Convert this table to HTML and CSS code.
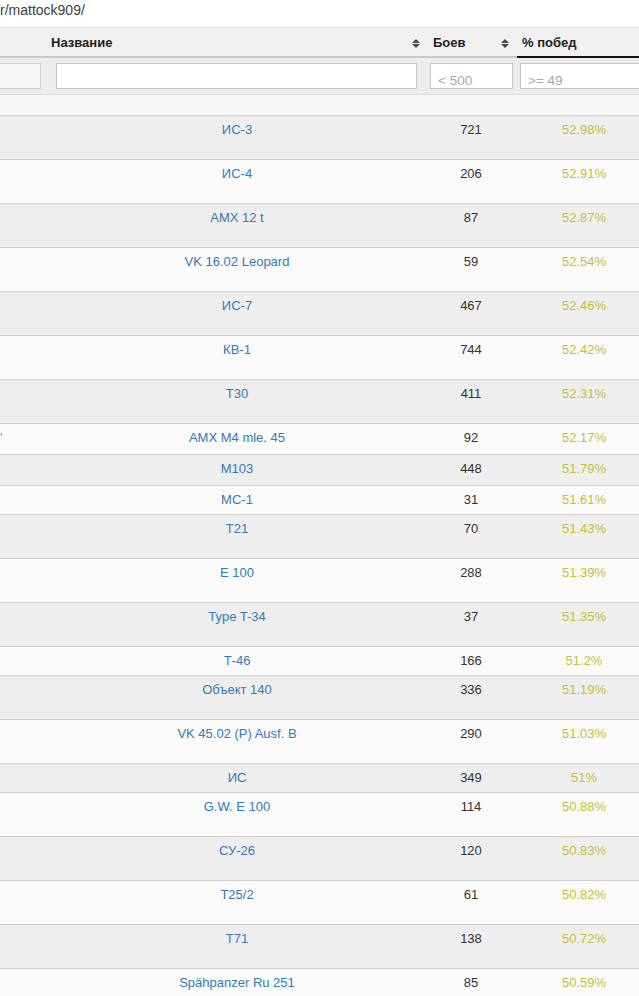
FILE: index.html
```html
<!DOCTYPE html>
<html lang="ru">
<head>
<meta charset="utf-8">
<title>mattock909</title>
<link rel="stylesheet" href="styles.css">
</head>
<body>
<div class="urlbar">r/mattock909/</div>
<div class="table">
  <div class="row head">
    <div class="cell"></div>
    <div class="cell sortable name-h"><span>Название</span><svg class="sort" width="8" height="9" viewBox="0 0 8 9"><polygon points="0,4 4,0 8,4"/><polygon points="0,5 4,9 8,5"/></svg></div>
    <div class="cell sortable battles-h"><span>Боев</span><svg class="sort" width="8" height="9" viewBox="0 0 8 9"><polygon points="0,4 4,0 8,4"/><polygon points="0,5 4,9 8,5"/></svg></div>
    <div class="cell sorted"><span>% побед</span></div>
  </div>
  <div class="row filters">
    <div class="cell f0"><input class="inp disabled" type="text"></div>
    <div class="cell f1"><input class="inp" type="text"></div>
    <div class="cell f2"><input class="inp" type="text" placeholder="< 500"></div>
    <div class="cell f3"><input class="inp" type="text" placeholder=">= 49"></div>
  </div>
  <div class="row empty"></div>

  <div class="row data odd tall"><div class="cell"></div><div class="cell name">ИС-3</div><div class="cell num">721</div><div class="cell pct">52.98%</div></div>
  <div class="row data even tall"><div class="cell"></div><div class="cell name">ИС-4</div><div class="cell num">206</div><div class="cell pct">52.91%</div></div>
  <div class="row data odd tall"><div class="cell"></div><div class="cell name">AMX 12 t</div><div class="cell num">87</div><div class="cell pct">52.87%</div></div>
  <div class="row data even tall"><div class="cell"></div><div class="cell name">VK 16.02 Leopard</div><div class="cell num">59</div><div class="cell pct">52.54%</div></div>
  <div class="row data odd tall"><div class="cell"></div><div class="cell name">ИС-7</div><div class="cell num">467</div><div class="cell pct">52.46%</div></div>
  <div class="row data even tall"><div class="cell"></div><div class="cell name">КВ-1</div><div class="cell num">744</div><div class="cell pct">52.42%</div></div>
  <div class="row data odd tall"><div class="cell"></div><div class="cell name">T30</div><div class="cell num">411</div><div class="cell pct">52.31%</div></div>
  <div class="row data even h31"><div class="cell first"><span class="cut">'</span></div><div class="cell name">AMX M4 mle. 45</div><div class="cell num">92</div><div class="cell pct">52.17%</div></div>
  <div class="row data odd h31"><div class="cell"></div><div class="cell name">M103</div><div class="cell num">448</div><div class="cell pct">51.79%</div></div>
  <div class="row data even h29"><div class="cell"></div><div class="cell name">МС-1</div><div class="cell num">31</div><div class="cell pct">51.61%</div></div>
  <div class="row data odd tall"><div class="cell"></div><div class="cell name">T21</div><div class="cell num">70</div><div class="cell pct">51.43%</div></div>
  <div class="row data even tall"><div class="cell"></div><div class="cell name">E 100</div><div class="cell num">288</div><div class="cell pct">51.39%</div></div>
  <div class="row data odd tall"><div class="cell"></div><div class="cell name">Type T-34</div><div class="cell num">37</div><div class="cell pct">51.35%</div></div>
  <div class="row data even h29"><div class="cell"></div><div class="cell name">Т-46</div><div class="cell num">166</div><div class="cell pct">51.2%</div></div>
  <div class="row data odd tall"><div class="cell"></div><div class="cell name">Объект 140</div><div class="cell num">336</div><div class="cell pct">51.19%</div></div>
  <div class="row data even tall"><div class="cell"></div><div class="cell name">VK 45.02 (P) Ausf. B</div><div class="cell num">290</div><div class="cell pct">51.03%</div></div>
  <div class="row data odd h29"><div class="cell"></div><div class="cell name">ИС</div><div class="cell num">349</div><div class="cell pct">51%</div></div>
  <div class="row data even tall"><div class="cell"></div><div class="cell name">G.W. E 100</div><div class="cell num">114</div><div class="cell pct">50.88%</div></div>
  <div class="row data odd tall"><div class="cell"></div><div class="cell name">СУ-26</div><div class="cell num">120</div><div class="cell pct">50.83%</div></div>
  <div class="row data even tall"><div class="cell"></div><div class="cell name">T25/2</div><div class="cell num">61</div><div class="cell pct">50.82%</div></div>
  <div class="row data odd tall"><div class="cell"></div><div class="cell name">T71</div><div class="cell num">138</div><div class="cell pct">50.72%</div></div>
  <div class="row data even tall"><div class="cell"></div><div class="cell name">Spähpanzer Ru 251</div><div class="cell num">85</div><div class="cell pct">50.59%</div></div>
</div>
</body>
</html>
```

FILE: styles.css
```css
html, body {
  margin: 0;
  padding: 0;
  overflow: hidden;
  background: #ffffff;
}
body {
  font-family: "Liberation Sans", Arial, sans-serif;
  font-size: 13px;
  color: #333333;
  width: 639px;
}
.urlbar {
  height: 27px;
  box-sizing: border-box;
  padding-top: 2px;
  font-size: 14px;
  line-height: 17px;
  color: #3c3c3c;
  white-space: nowrap;
}
.table {
  width: 654px;
}
.row {
  display: grid;
  grid-template-columns: 46px 382px 86px 140px;
  box-sizing: border-box;
}
.head {
  height: 31px;
  background: #f1f1f1;
  border-top: 1px solid #e2e2e2;
  border-bottom: 2px solid #c9c9c9;
  font-weight: bold;
  color: #222222;
}
.head .cell {
  padding-top: 4px;
  line-height: 22px;
  box-sizing: border-box;
  height: 28px;
}
.sortable {
  display: flex;
  justify-content: space-between;
  align-items: flex-start;
}
.name-h {
  padding-left: 5px;
  padding-right: 8px;
}
.battles-h {
  padding-left: 5px;
  padding-right: 5px;
}
.sort {
  margin-top: 7px;
  fill: #4a4a4a;
}
.sorted {
  margin-left: 3px;
  padding-left: 5px;
  margin-bottom: -2px;
  border-bottom: 2px solid #111111;
  height: 30px !important;
}
.filters {
  height: 37px;
  background: #ececec;
  border-bottom: 1px solid #dadada;
}
.filters .cell {
  padding-top: 5px;
  box-sizing: border-box;
  overflow: visible;
}
.inp {
  display: block;
  box-sizing: border-box;
  height: 26px;
  margin: 0;
  border: 1px solid #c4c4c4;
  border-radius: 0;
  background: #ffffff;
  padding: 8px 0 0 7px;
  font-family: "Liberation Sans", Arial, sans-serif;
  font-size: 13.5px;
  color: #555555;
  outline: none;
}
.inp::placeholder {
  color: #a9a9a9;
}
.inp.disabled {
  background: #f6f6f6;
  border-color: #d2d2d2;
}
.f0 .inp {
  width: 60px;
  margin-left: -19px;
}
.f1 {
  padding-left: 10px;
  padding-right: 11px;
}
.f1 .inp {
  width: 100%;
}
.f2 {
  padding-left: 2px;
  padding-right: 1px;
}
.f2 .inp {
  width: 100%;
}
.f3 {
  padding-left: 6px;
}
.f3 .inp {
  width: 134px;
}
.empty {
  height: 21px;
  background: #f8f8f8;
  border-bottom: 1px solid #cccccc;
}
.data {
  border-bottom: 1px solid #cfcfcf;
  line-height: 18px;
}
.data .cell {
  padding-top: 5px;
  text-align: center;
  white-space: nowrap;
}
.odd {
  background: #eeeeee;
}
.even {
  background: #fafafa;
}
.tall {
  height: 44px;
}
.h31 {
  height: 31px;
}
.h29 {
  height: 29px;
}
.name {
  color: #337ab7;
}
.num {
  color: #333333;
}
.pct {
  color: #c7bf35;
}
.data .first {
  text-align: left;
}
.cut {
  display: inline-block;
  color: #888888;
}
```
